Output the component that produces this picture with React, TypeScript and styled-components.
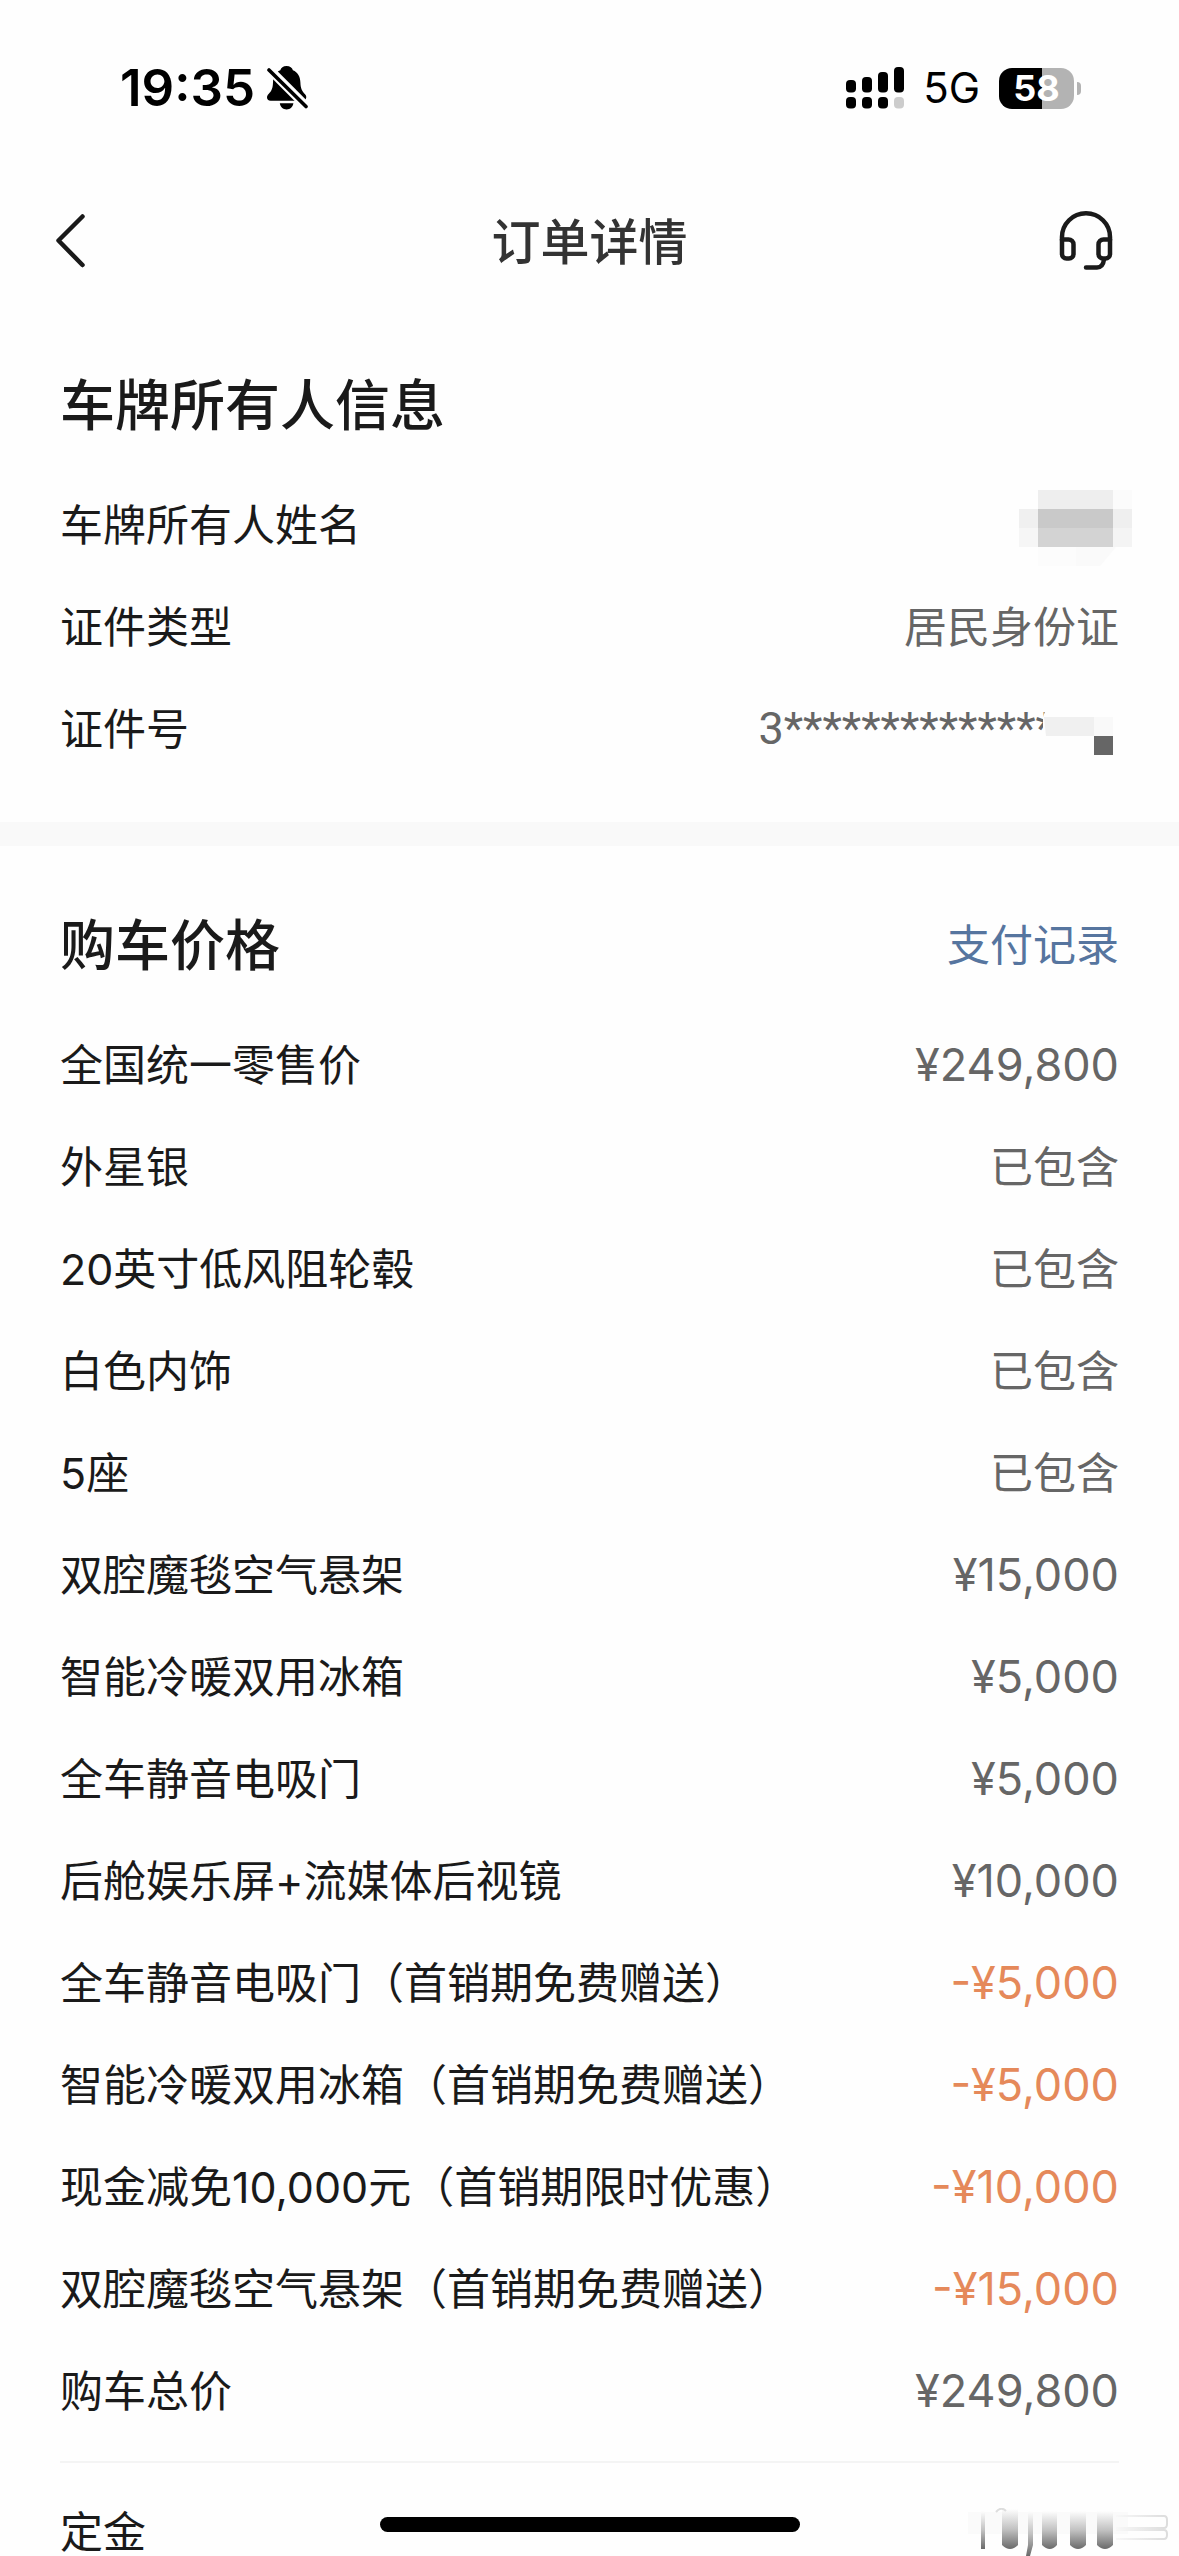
import React from "react";
import styled, { createGlobalStyle } from "styled-components";

const GlobalStyle = createGlobalStyle`
  * { box-sizing: border-box; }
  body {
    margin: 0;
    background: #fefefe;
    color: #1a1a1a;
    font-family: Inter, "Noto Sans CJK SC", sans-serif;
  }
`;

const Page = styled.main`
  display: flex;
  flex-direction: column;
  min-height: 100vh;
`;

const StatusBar = styled.div`
  display: flex;
  align-items: center;
  justify-content: space-between;
  height: 176px;
  padding: 0 98px 0 120px;
  color: #000;
`;

const StatusGroup = styled.div<{ $gap: number }>`
  display: flex;
  align-items: center;
  gap: ${(p) => p.$gap}px;
`;

const Clock = styled.time`
  font-size: 51px;
  font-weight: 600;
  line-height: 60px;
`;

const Network = styled.span`
  font-size: 42px;
  line-height: 48px;
`;

const Battery = styled.div`
  display: flex;
  align-items: center;
  gap: 3px;
`;

const BatteryBody = styled.span<{ $level: number }>`
  width: 75px;
  height: 41px;
  border-radius: 13px;
  background: linear-gradient(
    to right,
    #000 ${(p) => p.$level}%,
    #b3b3b3 ${(p) => p.$level}%
  );
  color: #fff;
  font-size: 36px;
  font-weight: 700;
  line-height: 41px;
  text-align: center;
`;

const BatteryTip = styled.span`
  width: 4px;
  height: 13px;
  border-radius: 0 6px 6px 0;
  background: #b3b3b3;
`;

const NavBar = styled.header`
  display: grid;
  grid-template-columns: 1fr auto 1fr;
  align-items: center;
  height: 130px;
  padding: 0 54px;
`;

const NavTitle = styled.h1`
  margin: 0;
  padding-top: 4px;
  color: #333;
  font-size: 49px;
  font-weight: 500;
  line-height: 60px;
`;

const IconButton = styled.button<{ $end?: boolean }>`
  display: flex;
  justify-self: ${(p) => (p.$end ? "end" : "start")};
  padding: 0;
  border: 0;
  background: none;
  color: #1a1a1a;
  cursor: pointer;
`;

const Section = styled.section`
  padding: 63px 60px 0;
`;

const SectionHead = styled.div`
  display: flex;
  align-items: center;
  justify-content: space-between;
  height: 72px;
  margin-bottom: 60px;
`;

const SectionTitle = styled.h2`
  margin: 0;
  font-size: 55px;
  font-weight: 500;
  line-height: 72px;
`;

const TextLink = styled.a`
  color: #56759f;
  font-size: 43px;
  line-height: 48px;
  text-decoration: none;
`;

const Rows = styled.dl`
  display: flex;
  flex-direction: column;
  gap: 54px;
  margin: 0;
`;

const Row = styled.div`
  display: flex;
  align-items: center;
  justify-content: space-between;
  height: 48px;
  font-size: 43px;
  line-height: 48px;
  white-space: nowrap;
`;

const Label = styled.dt``;

const Value = styled.dd<{ $discount?: boolean }>`
  display: flex;
  align-items: center;
  margin: 0;
  color: ${(p) => (p.$discount ? "#e5895a" : "#666")};
`;

const Amount = styled.span`
  font-size: 45px;
`;

const IdNumber = styled.span`
  font-family: Roboto, sans-serif;
  font-size: 45px;
`;

const Band = styled.div`
  height: 24px;
  margin-top: 69px;
  background: #f9f9f9;
`;

const Rule = styled.hr`
  width: 100%;
  height: 2px;
  margin: 46px 0 45px;
  border: 0;
  background: #f4f4f4;
`;

const NameMosaic = styled.svg`
  margin-right: -13px;
  overflow: visible;
`;

const IdMosaic = styled.svg`
  z-index: 1;
  margin: 0 6px 0 -12px;
`;

const SmearedAmount = styled.svg`
  margin-right: -49px;
`;

const HomeIndicator = styled.div`
  position: fixed;
  bottom: 24px;
  left: 50%;
  width: 420px;
  height: 15px;
  border-radius: 8px;
  background: #000;
  transform: translateX(-50%);
`;

function MutedBell() {
  return (
    <svg width="41" height="44" viewBox="0 0 41 44" aria-hidden="true">
      <path
        fill="#000"
        d="M19.500 0c3.400 0 5.800 1.800 6.400 4.300 5 2 7.300 6.300 7.500 12.200.2 5.500 1.400 8.300 4.600 11.700 1.400 1.500 1.500 2.900 1 4.300-.5 1.500-1.700 2.200-3.500 2.200H3.600C1.300 34.700 0 33.400 0 31.500c0-1.300.5-2.200 1.600-3.400 3.100-3.300 4.200-6.200 4.400-11.600.2-5.900 2.400-10.200 7.300-12.200C14 1.800 16.200 0 19.500 0zM12.800 37.300h13.600c-.5 3.700-3.200 6.100-6.800 6.100s-6.300-2.400-6.800-6.100z"
      />
      <path stroke="#fefefe" strokeWidth="9" d="M1 2l40 40" />
      <path stroke="#000" strokeWidth="3.600" strokeLinecap="round" d="M2 4l37 36.500" />
    </svg>
  );
}

function Signal() {
  return (
    <svg width="58" height="42" viewBox="0 0 58 42" aria-hidden="true">
      <g fill="#000">
        <rect x="0" y="13" width="10" height="12.500" rx="4" />
        <rect x="16" y="10" width="10" height="15.500" rx="4" />
        <rect x="32" y="5" width="10" height="20.500" rx="4" />
        <rect x="48" y="0" width="10" height="25.500" rx="4" />
        <rect x="0" y="30" width="10" height="11.500" rx="4" />
        <rect x="16" y="30" width="10" height="11.500" rx="4" />
        <rect x="32" y="30" width="10" height="11.500" rx="4" />
      </g>
      <rect x="48" y="30" width="10" height="11.500" rx="4" fill="#ccc" />
    </svg>
  );
}

function Chevron() {
  return (
    <svg width="32" height="56" viewBox="0 0 32 56" fill="none" aria-hidden="true">
      <path
        d="M28.500 3.500L4.500 27.500l24 24.500"
        stroke="currentColor"
        strokeWidth="4.500"
        strokeLinecap="round"
        strokeLinejoin="round"
      />
    </svg>
  );
}

function Headset() {
  return (
    <svg
      width="66"
      height="60"
      viewBox="0 0 66 60"
      fill="none"
      stroke="currentColor"
      strokeWidth="4.500"
      strokeLinecap="round"
      strokeLinejoin="round"
      aria-hidden="true"
    >
      <path d="M3 29v-3a24 23.700 0 0 1 48 0v3" />
      <path d="M3 28.500h6.500a5 5 0 0 1 5 5v9.500a4.500 4.500 0 0 1-4.500 4.500H7.500A4.500 4.500 0 0 1 3 43z" />
      <path d="M51 28.500h-6.500a5 5 0 0 0-5 5v9.500a4.500 4.500 0 0 0 4.500 4.500h2.500A4.500 4.500 0 0 0 51 43z" />
      <path d="M45 48.500c-.6 4.600-2.800 8-7 8H27" />
    </svg>
  );
}

function HiddenName() {
  return (
    <NameMosaic width="113" height="70" viewBox="0 0 113 70" role="img" aria-label="已隐藏">
      <rect x="0" y="19" width="19" height="19" fill="#f0f0f0" />
      <rect x="0" y="38" width="19" height="19" fill="#f6f6f6" />
      <rect x="19" y="0" width="75" height="19" fill="#eee" />
      <rect x="19" y="19" width="75" height="19" fill="#c9c9c9" />
      <rect x="19" y="38" width="75" height="19" fill="#d3d3d3" />
      <rect x="94" y="0" width="19" height="19" fill="#fbfbfb" />
      <rect x="94" y="19" width="19" height="19" fill="#efefef" />
      <rect x="94" y="38" width="19" height="19" fill="#f4f4f4" />
      <rect x="19" y="57" width="38" height="19" fill="#fcfcfc" />
      <path d="M57 57h40l-16 19H57z" fill="#fafafa" />
    </NameMosaic>
  );
}

function HiddenDigits() {
  return (
    <IdMosaic width="70" height="52" viewBox="0 0 70 52" aria-hidden="true">
      <path d="M5 0h65v52H0V14z" fill="#fefefe" />
      <path d="M1 14h50v19H3z" fill="#f0f0f0" />
      <rect x="51" y="14" width="19" height="19" fill="#f9f9f9" />
      <rect x="51" y="33" width="19" height="19" fill="#666" />
    </IdMosaic>
  );
}

function HiddenAmount() {
  return (
    <SmearedAmount width="200" height="48" viewBox="0 0 200 48" role="img" aria-label="已隐藏">
      <defs>
        <linearGradient id="smear" x1="0" y1="0" x2="0" y2="1">
          <stop offset="0" stopColor="#fefefe" />
          <stop offset="0.500" stopColor="#c2c2c2" />
          <stop offset="1" stopColor="#6a6a6a" />
        </linearGradient>
        <linearGradient id="streak" x1="148" y1="0" x2="200" y2="0" gradientUnits="userSpaceOnUse">
          <stop offset="0" stopColor="#f8f8f8" />
          <stop offset="1" stopColor="#dcdcdc" />
        </linearGradient>
      </defs>
      <rect x="0" y="4" width="160" height="22" fill="#fafafa" />
      <g fill="url(#smear)">
        <path d="M13 3h4v38h-4z" />
        <path d="M34 1h16v36q-8 8-16 0z" />
        <path d="M60 3h5v34l-3 11h-4l2-11z" />
        <path d="M74 3h15v34q-7 8-15 0z" />
        <path d="M102 3h16v34q-8 8-16 0z" />
        <path d="M129 3h16v34q-8 8-16 0z" />
      </g>
      <path d="M28 4q5-6 10-1" stroke="#ddd" strokeWidth="2" fill="none" />
      <g stroke="url(#streak)" strokeWidth="2" fill="none">
        <path d="M148 8h48q3 0 3 4v4q0 4-3 4h-48" />
        <path d="M148 22h48q3 0 3 4v1q0 4-3 4h-48" />
      </g>
    </SmearedAmount>
  );
}

type Item = {
  name: string;
  price?: string;
  discount?: boolean;
};

const items: Item[] = [
  { name: "全国统一零售价", price: "¥249,800" },
  { name: "外星银" },
  { name: "20英寸低风阻轮毂" },
  { name: "白色内饰" },
  { name: "5座" },
  { name: "双腔魔毯空气悬架", price: "¥15,000" },
  { name: "智能冷暖双用冰箱", price: "¥5,000" },
  { name: "全车静音电吸门", price: "¥5,000" },
  { name: "后舱娱乐屏+流媒体后视镜", price: "¥10,000" },
  { name: "全车静音电吸门（首销期免费赠送）", price: "-¥5,000", discount: true },
  { name: "智能冷暖双用冰箱（首销期免费赠送）", price: "-¥5,000", discount: true },
  { name: "现金减免10,000元（首销期限时优惠）", price: "-¥10,000", discount: true },
  { name: "双腔魔毯空气悬架（首销期免费赠送）", price: "-¥15,000", discount: true },
  { name: "购车总价", price: "¥249,800" },
];

export default function App() {
  return (
    <Page lang="zh-CN">
      <GlobalStyle />
      <StatusBar>
        <StatusGroup $gap={12}>
          <Clock>19:35</Clock>
          <MutedBell />
        </StatusGroup>
        <StatusGroup $gap={19}>
          <Signal />
          <Network>5G</Network>
          <Battery>
            <BatteryBody $level={58}>58</BatteryBody>
            <BatteryTip />
          </Battery>
        </StatusGroup>
      </StatusBar>

      <NavBar>
        <IconButton type="button" aria-label="返回">
          <Chevron />
        </IconButton>
        <NavTitle>订单详情</NavTitle>
        <IconButton type="button" aria-label="客服" $end>
          <Headset />
        </IconButton>
      </NavBar>

      <Section>
        <SectionHead>
          <SectionTitle>车牌所有人信息</SectionTitle>
        </SectionHead>
        <Rows>
          <Row>
            <Label>车牌所有人姓名</Label>
            <Value>
              <HiddenName />
            </Value>
          </Row>
          <Row>
            <Label>证件类型</Label>
            <Value>居民身份证</Value>
          </Row>
          <Row>
            <Label>证件号</Label>
            <Value>
              <IdNumber>3**************</IdNumber>
              <HiddenDigits />
            </Value>
          </Row>
        </Rows>
      </Section>

      <Band />

      <Section>
        <SectionHead>
          <SectionTitle>购车价格</SectionTitle>
          <TextLink href="#payments">支付记录</TextLink>
        </SectionHead>
        <Rows>
          {items.map((item) => (
            <Row key={item.name}>
              <Label>{item.name}</Label>
              <Value $discount={item.discount}>
                {item.price ? <Amount>{item.price}</Amount> : "已包含"}
              </Value>
            </Row>
          ))}
        </Rows>
        <Rule />
        <Rows>
          <Row>
            <Label>定金</Label>
            <Value>
              <HiddenAmount />
            </Value>
          </Row>
        </Rows>
      </Section>

      <HomeIndicator />
    </Page>
  );
}
